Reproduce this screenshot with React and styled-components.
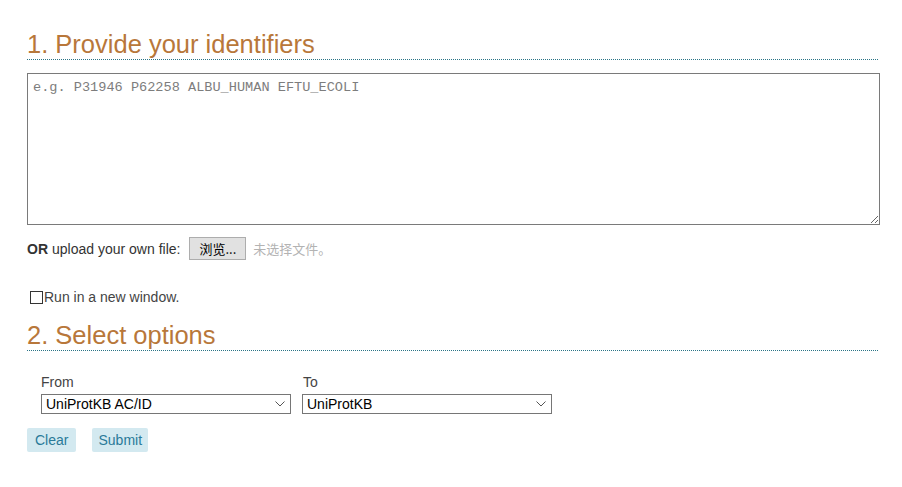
import React, { useState } from 'react';
import styled, { createGlobalStyle } from 'styled-components';

const GlobalStyle = createGlobalStyle`
  body {
    margin: 0;
    font-family: Arial, "Liberation Sans", sans-serif;
    font-size: 14px;
    color: #333;
    background: #fff;
  }
`;

const Page = styled.div`
  padding: 30px 24px 20px 27px;
`;

const Heading = styled.h2`
  margin: 0;
  font-family: Arial, "Liberation Sans", sans-serif;
  font-weight: normal;
  font-size: 25.5px;
  line-height: 29px;
  color: #b8773a;
  border-bottom: 1px dotted #2b7486;
  padding-bottom: 0;
`;

const IdBox = styled.textarea`
  display: block;
  box-sizing: border-box;
  width: 853px;
  height: 152px;
  margin: 13px 0 0;
  padding: 6px 5px;
  border: 1px solid #7a7a7a;
  font-family: "Liberation Mono", "Courier New", monospace;
  font-size: 13.6px;
  color: #333;
  resize: both;

  &::placeholder {
    color: #7d7d7d;
  }
`;

const UploadRow = styled.div`
  display: flex;
  align-items: center;
  margin-top: 12px;
  height: 23px;
  font-size: 14px;
  color: #333;

  b {
    margin-right: 4px;
  }
`;

const BrowseButton = styled.button`
  margin-left: 9px;
  height: 23px;
  padding: 0 9px;
  background: #e1e1e1;
  border: 1px solid #adadad;
  border-radius: 0;
  font-family: "Noto Sans CJK SC", Arial, sans-serif;
  font-size: 13px;
  color: #000;
`;

const NoFile = styled.span`
  margin-left: 7px;
  font-family: "Noto Sans CJK SC", sans-serif;
  font-size: 13px;
  color: #b3b3b3;
`;

const CheckRow = styled.label`
  display: flex;
  align-items: center;
  margin-top: 29px;
  margin-left: 3px;
  font-size: 14px;
  color: #444;
`;

const Box = styled.span`
  box-sizing: border-box;
  width: 13px;
  height: 13px;
  border: 1px solid #333;
  margin-right: 1px;
  background: ${p => (p.checked ? '#2b7486' : '#fff')};
`;

const Section = styled.div`
  margin-top: 16px;
`;

const Selects = styled.div`
  display: flex;
  gap: 11px;
  padding: 23px 0 0 14px;
`;

const Field = styled.div`
  display: flex;
  flex-direction: column;
`;

const FieldLabel = styled.span`
  font-size: 14px;
  line-height: 16px;
  color: #444;
  margin-bottom: 4px;
  margin-left: ${p => p.$indent || 0}px;
`;

const SelectBox = styled.div`
  position: relative;
  box-sizing: border-box;
  width: 250px;
  height: 20px;
  border: 1px solid #767676;
  padding-left: 4px;
  font-size: 14px;
  line-height: 18px;
  color: #000;

  svg {
    position: absolute;
    right: 5px;
    top: 6px;
  }
`;

const Buttons = styled.div`
  display: flex;
  gap: 16px;
  margin-top: 14px;
`;

const ActionButton = styled.button`
  height: 24px;
  padding: 0 ${p => p.$pad || 8}px;
  background: #d3e9f0;
  border: none;
  border-radius: 2px;
  font-family: Arial, "Liberation Sans", sans-serif;
  font-size: 14px;
  color: #2a7a99;
`;

const Chevron = () => (
  <svg width="10" height="6" viewBox="0 0 10 6">
    <path d="M0.5 0.5 L5 5 L9.5 0.5" fill="none" stroke="#555" strokeWidth="1" />
  </svg>
);

const Select = ({ value }) => (
  <SelectBox>
    {value}
    <Chevron />
  </SelectBox>
);

export default function App() {
  const [newWindow, setNewWindow] = useState(false);

  return (
    <Page>
      <GlobalStyle />
      <Heading>1. Provide your identifiers</Heading>
      <IdBox placeholder="e.g. P31946 P62258 ALBU_HUMAN EFTU_ECOLI" />
      <UploadRow>
        <b>OR</b> upload your own file:
        <BrowseButton>浏览...</BrowseButton>
        <NoFile>未选择文件。</NoFile>
      </UploadRow>
      <CheckRow onClick={() => setNewWindow(!newWindow)}>
        <Box checked={newWindow} />
        Run in a new window.
      </CheckRow>
      <Section>
        <Heading>2. Select options</Heading>
        <Selects>
          <Field>
            <FieldLabel>From</FieldLabel>
            <Select value="UniProtKB AC/ID" />
          </Field>
          <Field>
            <FieldLabel $indent={1}>To</FieldLabel>
            <Select value="UniProtKB" />
          </Field>
        </Selects>
        <Buttons>
          <ActionButton $pad={8}>Clear</ActionButton>
          <ActionButton $pad={6}>Submit</ActionButton>
        </Buttons>
      </Section>
    </Page>
  );
}
